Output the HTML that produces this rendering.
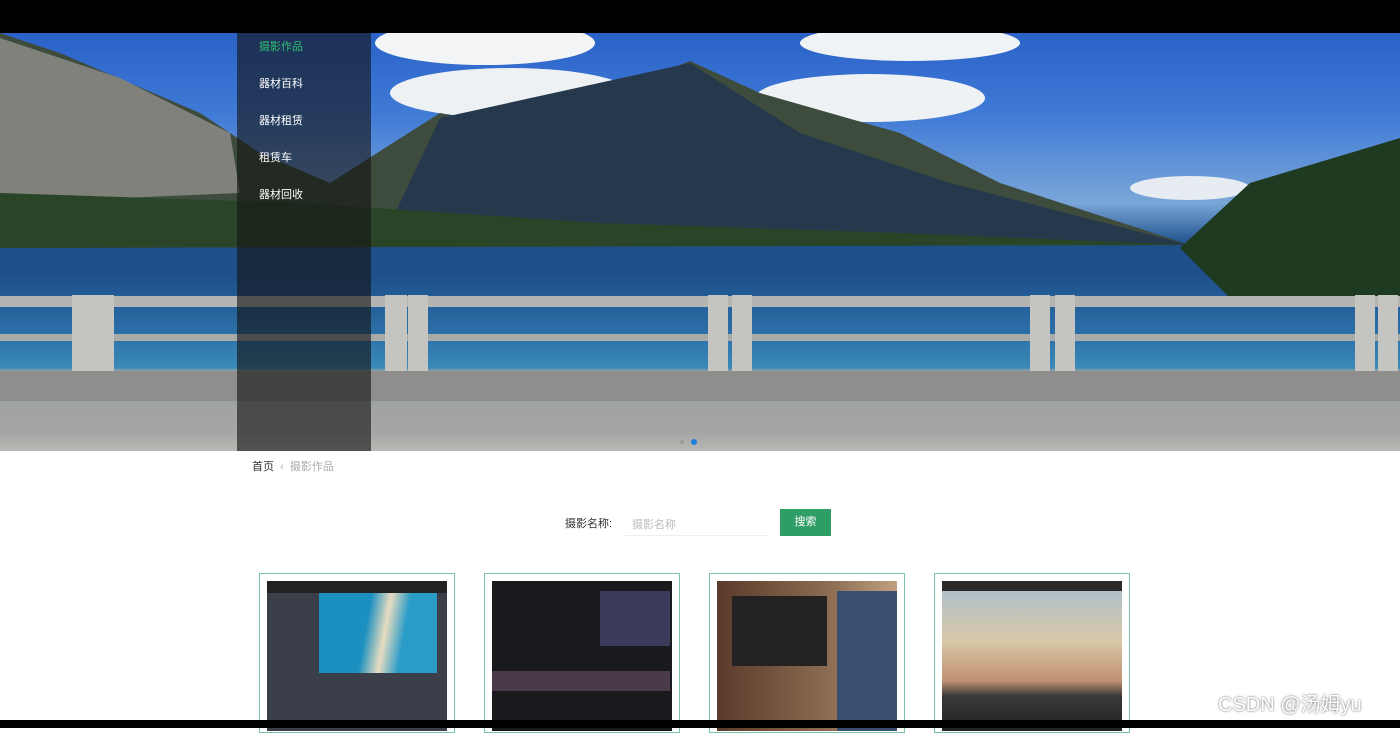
<!DOCTYPE html>
<html><head><meta charset="utf-8"><style>
*{margin:0;padding:0;box-sizing:border-box}
body{width:1400px;height:728px;overflow:hidden;background:#fff;font-family:"Liberation Sans","Noto Sans CJK SC",sans-serif;position:relative}
.abs{position:absolute}
</style></head><body>
<div class="abs" style="left:0;top:0;width:1400px;height:33px;background:#000"></div>
<div class="abs" style="left:0;top:33px;width:1400px;height:418px;overflow:hidden;background:linear-gradient(#2a62c8 0px,#3f7ad6 80px,#7aa6d8 170px,#1d4f8a 212px,#1d4f8a 240px,#2c6fa8 300px,#3a8ab8 335px,#9aa0a2 338px,#a5a6a4 400px,#b8b8b4 418px)">
<svg class="abs" style="left:0;top:0" width="1400" height="418">
<ellipse cx="485" cy="10" rx="110" ry="22" fill="#f2f4f6"/>
<ellipse cx="510" cy="60" rx="120" ry="25" fill="#eef1f4"/>
<ellipse cx="870" cy="65" rx="115" ry="24" fill="#eef2f5"/>
<ellipse cx="910" cy="10" rx="110" ry="18" fill="#f0f3f6"/>
<ellipse cx="1190" cy="155" rx="60" ry="12" fill="#e6ecf2"/>
<polygon points="0,0 60,20 200,80 260,120 330,150 440,80 520,95 690,28 760,60 900,100 1000,150 1190,212 0,215" fill="#3e4c3e"/>
<polygon points="0,5 120,45 230,100 240,160 0,170" fill="#7f817a"/>
<polygon points="440,85 690,30 800,100 950,150 1190,212 380,212" fill="#26394c"/>
<polygon points="0,160 300,170 600,190 900,200 1190,212 0,215" fill="#2a4428"/>
<polygon points="1180,215 1250,150 1400,105 1400,270 1230,265" fill="#1e3a20"/>
<rect x="0" y="263" width="1400" height="11" fill="#b3b5b2"/>
<rect x="0" y="301" width="1400" height="7" fill="#a9aba8"/>
<g fill="#c4c5c0"><rect x="72" y="262" width="20" height="76"/><rect x="92" y="262" width="22" height="76"/><rect x="385" y="262" width="22" height="76"/><rect x="408" y="262" width="20" height="76"/><rect x="708" y="262" width="20" height="76"/><rect x="732" y="262" width="20" height="76"/><rect x="1030" y="262" width="20" height="76"/><rect x="1055" y="262" width="20" height="76"/><rect x="1355" y="262" width="20" height="76"/><rect x="1378" y="262" width="20" height="76"/></g>
<rect x="0" y="338" width="1400" height="30" fill="#8e8f8c"/>
<circle cx="694" cy="409" r="3" fill="#1e7fe0"/><circle cx="682" cy="409" r="2" fill="#999"/>
</svg>
</div>
<div class="abs" style="left:237px;top:33px;width:134px;height:418px;background:rgba(20,20,20,0.62);font-size:11px;color:#fff">
<div class="abs" style="left:22px;top:5px;color:#2fbf71">摄影作品</div>
<div class="abs" style="left:22px;top:42px">器材百科</div>
<div class="abs" style="left:22px;top:79px">器材租赁</div>
<div class="abs" style="left:22px;top:116px">租赁车</div>
<div class="abs" style="left:22px;top:153px">器材回收</div>
</div>
<div class="abs" style="left:252px;top:458px;font-size:11px;color:#333">首页 <span style="color:#aaa">&nbsp;‹&nbsp; 摄影作品</span></div>
<div class="abs" style="left:565px;top:515px;font-size:11px;color:#333">摄影名称:</div>
<div class="abs" style="left:624px;top:509px;width:145px;height:27px;border-bottom:1px solid #eee;font-size:11px;color:#bbb;padding:7px 8px">摄影名称</div>
<div class="abs" style="left:780px;top:509px;width:51px;height:27px;background:#2e9e66;color:#fff;font-size:11px;text-align:center;line-height:27px">搜索</div>
<div class="abs" style="left:259px;top:573px;width:196px;height:160px;border:1px solid #7cc3a5;padding:7px"><div style="height:150px;background:linear-gradient(#222 0 12px,#3a3f4a 12px);position:relative"><div class="abs" style="left:52px;top:12px;width:118px;height:80px;background:linear-gradient(100deg,#1a8fc0 0 40%,#e8dcc0 55%,#2a9cc8 70%)"></div></div></div>
<div class="abs" style="left:484px;top:573px;width:196px;height:160px;border:1px solid #7cc3a5;padding:7px"><div style="height:150px;background:#1a1a1e;position:relative"><div class="abs" style="left:108px;top:10px;width:70px;height:55px;background:#3a3a5a"></div><div class="abs" style="left:0;top:90px;width:178px;height:20px;background:#4a3a4a"></div></div></div>
<div class="abs" style="left:709px;top:573px;width:196px;height:160px;border:1px solid #7cc3a5;padding:7px"><div style="height:150px;background:linear-gradient(90deg,#5a3a2a,#8a6a50 60%,#c0a080);position:relative"><div class="abs" style="left:15px;top:15px;width:95px;height:70px;background:#222"></div><div class="abs" style="left:120px;top:10px;width:60px;height:140px;background:#3a5070"></div></div></div>
<div class="abs" style="left:934px;top:573px;width:196px;height:160px;border:1px solid #7cc3a5;padding:7px"><div style="height:150px;background:linear-gradient(#2a2a2a 0 10px,#b0c0c8 10px,#d8c8a8 60px,#c09070 100px,#3a3a3a 115px,#222);"></div></div>
<div class="abs" style="left:1218px;top:688px;font-size:20px;color:#fff;text-shadow:0 0 2px #555">CSDN @汤姆yu</div>
<div class="abs" style="left:0;top:720px;width:1400px;height:8px;background:#000"></div>
</body></html>
